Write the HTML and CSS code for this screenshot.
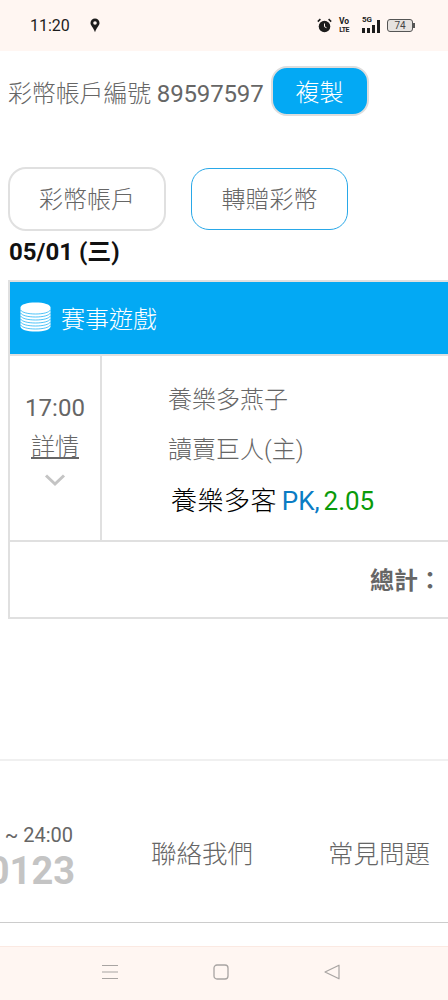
FILE: index.html
```html
<!DOCTYPE html>
<html lang="zh-Hant">
<head>
  <meta charset="UTF-8" />
  <meta name="viewport" content="width=device-width, initial-scale=1.0" />
  <title>彩幣帳戶</title>
  <link rel="stylesheet" href="styles.css">
</head>
<body>
  <div class="status-bar">
    <div class="status-left">
      <span class="clock">11:20</span>
      <svg class="pin" width="10" height="15" viewBox="0 0 10 15">
        <path d="M5 0.5a4.500 4.500 0 0 1 4.500 4.500c0 2.600-2.400 3.600-4.500 9.300C2.900 8.600 0.500 7.600 0.500 5A4.500 4.500 0 0 1 5 0.500z" fill="#1c1c1c"/>
        <circle cx="5" cy="5" r="1.800" fill="#fff6f2"/>
      </svg>
    </div>
    <div class="status-right">
      <svg width="15" height="15" viewBox="0 0 15 15">
        <circle cx="7.500" cy="8.500" r="5.800" fill="#1c1c1c"/>
        <path d="M7.500 5.500v3.200l2 1" stroke="#fff6f2" stroke-width="1" fill="none"/>
        <path d="M0.800 3.600L3.400 1.200M14.200 3.600L11.600 1.200" stroke="#1c1c1c" stroke-width="1.600"/>
      </svg>
      <span class="volte">Vo<br><span class="lte">LTE</span></span>
      <div class="signal">
        <span class="five-g">5G</span>
        <div class="bars">
          <i class="bar-1"></i><i class="bar-2"></i><i class="bar-3"></i><i class="bar-4"></i>
        </div>
      </div>
      <div class="battery"><span>74</span></div>
    </div>
  </div>

  <div class="account-row">
    <span class="account-no">彩幣帳戶編號 <span class="num">89597597</span></span>
    <button class="copy-btn">複製</button>
  </div>

  <div class="tabs">
    <button class="tab">彩幣帳戶</button>
    <button class="tab tab-active">轉贈彩幣</button>
  </div>

  <div class="date">05/01 (三)</div>

  <div class="game-table">
    <div class="game-head">
      <svg width="31" height="30" viewBox="0 0 31 30">
        <path d="M0.500 5.500C0.500 2.500 7 0.500 15.500 0.500S30.500 2.500 30.500 5.500V24.500C30.500 27.500 24 29.500 15.500 29.500S0.500 27.500 0.500 24.500z" fill="#fff"/>
        <g fill="none" stroke="#03a9f4" stroke-width="0.700">
          <path d="M0.500 8C2 10.500 8 12 15.500 12S29 10.500 30.500 8"/>
          <path d="M0.500 11C2 13.500 8 15 15.500 15S29 13.500 30.500 11"/>
          <path d="M0.500 14C2 16.500 8 18 15.500 18S29 16.500 30.500 14"/>
          <path d="M0.500 17C2 19.500 8 21 15.500 21S29 19.500 30.500 17"/>
          <path d="M0.500 20C2 22.500 8 24 15.500 24S29 22.500 30.500 20"/>
          <path d="M0.500 23C2 25.500 8 27 15.500 27S29 25.500 30.500 23"/>
        </g>
      </svg>
      <span>賽事遊戲</span>
    </div>
    <div class="game-row">
      <div class="time-cell">
        <div class="time">17:00</div>
        <a class="detail">詳情</a>
        <svg class="chevron" width="22" height="14" viewBox="0 0 22 14">
          <path d="M2 2.500L11 11L20 2.500" stroke="#c4c4c4" stroke-width="3" fill="none"/>
        </svg>
      </div>
      <div class="info-cell">
        <div class="team">養樂多燕子</div>
        <div class="team">讀賣巨人(主)</div>
        <div class="pick">養樂多客 <span class="pick-type">PK,</span> <span class="pick-odds">2.05</span></div>
      </div>
    </div>
    <div class="total-row"><span>總計：</span></div>
  </div>

  <div class="footer">
    <div class="hotline">
      <div class="hours">~ 24:00</div>
      <div class="phone">0123</div>
    </div>
    <a class="foot-link link-contact">聯絡我們</a>
    <a class="foot-link">常見問題</a>
  </div>

  <div class="nav-bar">
    <svg width="16" height="16" viewBox="0 0 16 16">
      <path d="M0 1.500h16M0 8h16M0 14.500h16" stroke="#a8a4a2" stroke-width="1.200"/>
    </svg>
    <svg width="16" height="16" viewBox="0 0 16 16">
      <rect x="1" y="1" width="14" height="14" rx="3" fill="none" stroke="#a8a4a2" stroke-width="1.300"/>
    </svg>
    <svg width="16" height="16" viewBox="0 0 16 16">
      <path d="M1 8L15 1.200V14.800z" fill="none" stroke="#a8a4a2" stroke-width="1.200" stroke-linejoin="round"/>
    </svg>
  </div>
</body>
</html>
```

FILE: styles.css
```css
* { box-sizing: border-box; }
html, body {
  margin: 0;
  padding: 0;
  height: 1000px;
  overflow: hidden;
  background: #fff;
  color: #666;
  font-family: Roboto, 'Noto Sans CJK TC', sans-serif;
  font-weight: 300;
}
body {
  display: flex;
  flex-direction: column;
}

.status-bar {
  height: 51px;
  flex: none;
  display: flex;
  justify-content: space-between;
  align-items: center;
  padding: 0 35px 0 30px;
  background: #fff6f2;
  color: #1c1c1c;
}
.status-left {
  display: flex;
  align-items: center;
  gap: 20px;
}
.clock {
  font-size: 16px;
  font-weight: 400;
}
.status-right {
  display: flex;
  align-items: center;
  gap: 7px;
}
.volte {
  width: 10px;
  font-size: 8.500px;
  line-height: 8px;
  font-weight: 700;
  text-align: center;
  white-space: nowrap;
}
.lte {
  font-size: 7px;
  letter-spacing: -0.600px;
}
.signal {
  position: relative;
  width: 24px;
  height: 15px;
}
.five-g {
  position: absolute;
  top: -3px;
  left: 6px;
  font-size: 8px;
  font-weight: 700;
}
.bars {
  position: absolute;
  right: 0;
  bottom: 0;
  display: flex;
  align-items: flex-end;
  gap: 2px;
}
.bars i {
  display: block;
  width: 3px;
  background: #1c1c1c;
}
.bar-1 { height: 5px; }
.bar-2 { height: 5px; }
.bar-3 { height: 8px; }
.bar-4 { height: 13px; }
.battery {
  position: relative;
  width: 26px;
  height: 13px;
  display: flex;
  justify-content: center;
  align-items: center;
  border: 1px solid #555;
  border-radius: 3px;
  background: #e6e2df;
  font-size: 10px;
  font-weight: 400;
  color: #444;
}
.battery::after {
  content: "";
  position: absolute;
  right: -3px;
  top: 3px;
  width: 2px;
  height: 5px;
  background: #555;
}

.account-row {
  display: flex;
  align-items: center;
  gap: 7px;
  padding: 15px 0 0 8px;
  font-size: 24px;
  white-space: nowrap;
}
.account-no { letter-spacing: -0.150px; }
.num { font-weight: 400; }
.copy-btn {
  width: 98px;
  height: 50px;
  padding-bottom: 3px;
  border: 2px solid #ddd;
  border-radius: 16px;
  background: #03a9f4;
  color: #fff;
  font: inherit;
}

.tabs {
  display: flex;
  align-items: center;
  gap: 25px;
  padding: 51px 0 0 8px;
}
.tab {
  width: 158px;
  height: 64px;
  padding-bottom: 4px;
  border: 2px solid #e0e0e0;
  border-radius: 18px;
  background: #fff;
  color: #666;
  font: inherit;
  font-size: 24px;
}
.tab-active {
  width: 157px;
  height: 62px;
  border: 1px solid #29a8e8;
}

.date {
  padding: 3px 0 0 9px;
  font-size: 24px;
  line-height: 36px;
  font-weight: 700;
  color: #111;
}

.game-table {
  width: 700px;
  margin: 10px 0 0 8px;
  flex: none;
  border: 2px solid #e0e0e0;
}
.game-head {
  height: 72px;
  display: flex;
  align-items: center;
  gap: 10px;
  padding: 0 0 2px 10px;
  background: #03a9f4;
  color: #fff;
  font-size: 24px;
}
.game-row {
  display: flex;
  height: 188px;
  border-top: 2px solid #e0e0e0;
  border-bottom: 2px solid #e0e0e0;
}
.time-cell {
  width: 92px;
  flex: none;
  display: flex;
  flex-direction: column;
  align-items: center;
  padding-top: 34px;
  border-right: 2px solid #e0e0e0;
  font-size: 24px;
}
.time {
  line-height: 36px;
  font-weight: 400;
}
.detail {
  margin-top: 3px;
  line-height: 36px;
  text-decoration: underline;
}
.chevron { margin-top: 8px; }
.info-cell {
  padding: 21px 0 0 66px;
  font-size: 24px;
}
.team {
  height: 50px;
  line-height: 46px;
}
.pick {
  padding-left: 3px;
  line-height: 48px;
  font-size: 26px;
  letter-spacing: 0.500px;
  color: #000;
}
.pick-type {
  color: #0a7cc4;
  font-weight: 400;
  letter-spacing: 0;
  margin-left: -2px;
}
.pick-odds {
  color: #0a9a0a;
  font-weight: 400;
  letter-spacing: 0;
  margin-left: -3px;
}
.total-row {
  height: 75px;
  padding: 0 0 2px 360px;
  display: flex;
  align-items: center;
  font-size: 24px;
  font-weight: 700;
}

.footer {
  height: 164px;
  margin-top: 140px;
  padding-top: 20px;
  flex: none;
  display: flex;
  align-items: center;
  border-top: 2px solid #f0f0f0;
  border-bottom: 1px solid #ccc;
}
.hotline {
  width: 76px;
  flex: none;
  overflow: hidden;
  display: flex;
  flex-direction: column;
  align-items: flex-end;
  margin-top: 10px;
  white-space: nowrap;
}
.hours {
  font-size: 20px;
  font-weight: 400;
  line-height: 28px;
  margin-right: 3px;
}
.phone {
  font-size: 38px;
  font-weight: 700;
  line-height: 44px;
  color: #c4c4c4;
  margin-right: 1px;
}
.foot-link {
  font-size: 25.500px;
  margin-left: 75px;
}

.nav-bar {
  margin-top: 23px;
  height: 54px;
  flex: none;
  display: flex;
  justify-content: center;
  align-items: center;
  gap: 95px;
  padding: 0 6px 3px 0;
  border-top: 1px solid #fbe9e2;
  background: #fff6f2;
}
```
